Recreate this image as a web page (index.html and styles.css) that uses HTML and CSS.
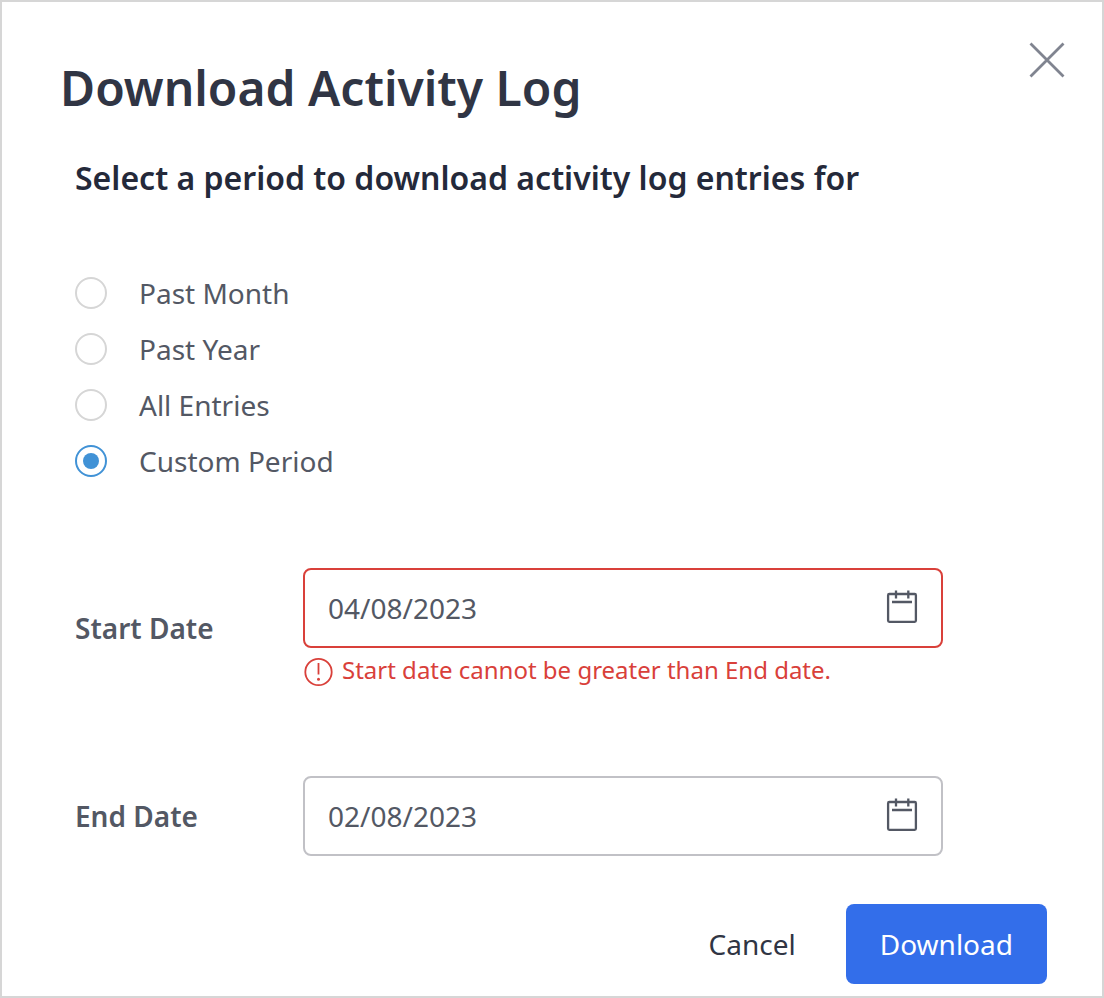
FILE: index.html
```html
<!DOCTYPE html>
<html lang="en">
<head>
<meta charset="utf-8">
<title>Download Activity Log</title>
<link rel="stylesheet" href="styles.css">
</head>
<body>
<form class="dialog" role="dialog" aria-labelledby="dialog-title">
  <header class="dialog-header">
    <h1 class="title" id="dialog-title">Download Activity Log</h1>
    <button class="close" type="button" aria-label="Close">
      <svg width="36" height="36" viewBox="0 0 36 36" fill="none" stroke="currentColor" stroke-width="2.8"><path d="M1.5 1.5L34.5 34.5M34.5 1.5L1.5 34.5"/></svg>
    </button>
  </header>
  <fieldset class="periods">
    <legend class="subtitle">Select a period to download activity log entries for</legend>
    <label class="option"><input class="radio" type="radio" name="period">Past Month</label>
    <label class="option"><input class="radio" type="radio" name="period">Past Year</label>
    <label class="option"><input class="radio" type="radio" name="period">All Entries</label>
    <label class="option"><input class="radio" type="radio" name="period" checked>Custom Period</label>
  </fieldset>
  <div class="field">
    <label class="field-label" for="start">Start Date</label>
    <div class="control">
      <div class="date-box date-box-error">
        <input class="date" id="start" type="text" value="04/08/2023" aria-invalid="true" aria-describedby="start-error">
        <svg class="calendar" width="32" height="36" viewBox="0 0 32 36" fill="none" stroke="currentColor" stroke-width="2.3"><rect x="2.1" y="4" width="27.8" height="27.8" rx="1.2"/><path d="M10 .5V8.5M22.3 .5V8.5M6 12H26"/></svg>
      </div>
      <p class="error" id="start-error">
        <svg width="32" height="32" viewBox="0 0 32 32" fill="none" stroke="currentColor" stroke-width="1.8"><circle cx="15.5" cy="16" r="13.2"/><path d="M15.5 7V18.5"/><circle cx="15.5" cy="23.3" r="1.5" fill="currentColor" stroke="none"/></svg>
        <span>Start date cannot be greater than End date.</span>
      </p>
    </div>
  </div>
  <div class="field">
    <label class="field-label" for="end">End Date</label>
    <div class="control">
      <div class="date-box">
        <input class="date" id="end" type="text" value="02/08/2023">
        <svg class="calendar" width="32" height="36" viewBox="0 0 32 36" fill="none" stroke="currentColor" stroke-width="2.3"><rect x="2.1" y="4" width="27.8" height="27.8" rx="1.2"/><path d="M10 .5V8.5M22.3 .5V8.5M6 12H26"/></svg>
      </div>
    </div>
  </div>
  <footer class="actions">
    <button class="cancel" type="button">Cancel</button>
    <button class="download" type="submit">Download</button>
  </footer>
</form>
</body>
</html>
```
FILE: styles.css
```css
* { box-sizing: border-box; }
body {
  margin: 0;
  background: #fff;
  color: #535864;
  font-family: "Noto Sans", sans-serif;
  font-size: 28px;
  line-height: 40px;
}
button, input { font: inherit; }
.dialog {
  min-height: 100vh;
  padding: 40px 55px 12px 58px;
  border: 2px solid #d6d6d6;
}
.dialog-header {
  display: flex;
  justify-content: space-between;
  align-items: flex-start;
  margin-right: -18px;
}
.title {
  margin: 12px 0 0;
  color: #303544;
  font-size: 48px;
  line-height: 68px;
  font-weight: 600;
}
.close {
  display: flex;
  padding: 0;
  border: 0;
  background: none;
  color: #808490;
}
.periods {
  margin: 34px 0 0;
  padding: 0 0 0 15px;
  border: 0;
  min-width: 0;
}
.subtitle {
  margin-bottom: 65px;
  padding: 0;
  color: #24293a;
  font-size: 32px;
  line-height: 44px;
  font-weight: 600;
}
.option {
  display: flex;
  align-items: center;
  gap: 32px;
  height: 56px;
}
.radio {
  display: grid;
  place-items: center;
  appearance: none;
  width: 32px;
  height: 32px;
  margin: 0;
  border: 2px solid #d6d6d6;
  border-radius: 50%;
}
.radio:checked { border-color: #4192d6; }
.radio:checked::before {
  content: "";
  width: 16px;
  height: 16px;
  border-radius: 50%;
  background: #4192d6;
}
.field {
  display: grid;
  grid-template-columns: 228px minmax(0, 640px);
  align-items: center;
  margin: 79px 0 0 15px;
}
.field + .field { margin-top: 88px; }
.field-label { font-weight: 600; }
.date-box {
  display: flex;
  align-items: center;
  height: 80px;
  padding: 0 23px;
  border: 2px solid #c1c1c6;
  border-radius: 8px;
}
.date-box-error { border-color: #d9403a; }
.date {
  flex: 1;
  min-width: 0;
  padding: 0;
  border: 0;
  outline: 0;
  background: none;
  color: inherit;
}
.error {
  display: flex;
  align-items: flex-end;
  gap: 7px;
  margin: 4px 0 0;
  color: #d9403a;
  font-size: 24px;
  line-height: 36px;
}
.actions {
  display: flex;
  justify-content: flex-end;
  margin-top: 48px;
}
.cancel, .download {
  height: 80px;
  padding: 0 34px;
  border: 0;
  border-radius: 8px;
}
.cancel { background: none; color: #303544; margin-right: 16px; }
.download { background: #336eea; color: #fff; }
```
